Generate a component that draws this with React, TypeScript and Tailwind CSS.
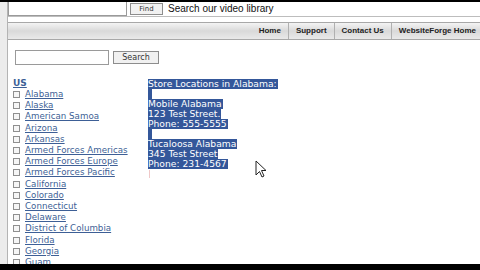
const STATES = [
  "Alabama",
  "Alaska",
  "American Samoa",
  "Arizona",
  "Arkansas",
  "Armed Forces Americas",
  "Armed Forces Europe",
  "Armed Forces Pacific",
  "California",
  "Colorado",
  "Connecticut",
  "Delaware",
  "District of Columbia",
  "Florida",
  "Georgia",
  "Guam",
];

const NAV = ["Home", "Support", "Contact Us", "WebsiteForge Home"];

// selected (highlighted) text lines, "" = empty line
const STORE = [
  "Store Locations in Alabama:",
  "",
  "Mobile Alabama",
  "123 Test Street.",
  "Phone: 555-5555",
  "",
  "Tucaloosa Alabama",
  "345 Test Street",
  "Phone: 231-4567",
];

function Cursor() {
  return (
    <svg width="12" height="19" viewBox="0 0 12 19" className="absolute left-[255px] top-[160px]">
      <path d="M1 1 L1 15 L4.5 11.5 L7 17 L9 16 L6.5 10.5 L11 10.5 Z" fill="#fff" stroke="#222" strokeWidth="1" />
    </svg>
  );
}

export default function App() {
  return (
    <div
      className="relative w-[480px] h-[270px] overflow-hidden bg-white flex flex-col"
      style={{ fontFamily: '"DejaVu Sans", Verdana, sans-serif' }}
    >
      <div className="h-[2px] shrink-0 bg-black" />
      <div className="flex flex-1 min-h-0 overflow-hidden">
        {/* left margin strip */}
        <div className="w-[8px] shrink-0 bg-[#ececec] border-r border-[#b4b4b4]" />

        <div className="flex-1 flex flex-col">
          {/* top search row */}
          <div className="shrink-0 flex items-start h-[15px] border-b border-[#bdbdbd]">
            <div className="w-[119px] h-[14px] border border-[#9a9a9a] border-t-0 bg-white" />
            <div className="ml-[3px] mt-[1px] w-[33px] h-[12px] border border-[#8d8d8d] bg-[#f1f1f1] text-[7px] leading-[10px] text-center text-[#333]">
              Find
            </div>
            <span className="ml-[5px] mt-[1px] text-[10px] leading-[12px] text-[#111]" style={{ fontFamily: '"Liberation Sans", Arial, sans-serif' }}>
              Search our video library
            </span>
          </div>

          {/* nav bar */}
          <div className="shrink-0 mt-[5px] -mr-[3px] h-[18px] flex justify-end border-t border-b border-[#a8a8a8] bg-gradient-to-b from-[#f4f4f4] via-[#d9d9d9] to-[#e9e9e9]">
            {NAV.map((n, i) => (
              <div
                key={n}
                className={
                  "flex items-center px-[7px] text-[8px] font-bold text-[#222] " +
                  (i > 0 ? "border-l border-[#b0b0b0]" : "")
                }
                style={{ fontFamily: '"Liberation Sans", Arial, sans-serif' }}
              >
                {n}
              </div>
            ))}
          </div>

          {/* body */}
          <div className="shrink-0 flex flex-col pl-[7px] pt-[10px]">
            <div className="flex items-center">
              <div className="w-[94px] h-[15px] border border-[#9a9a9a]" />
              <div className="ml-[4px] w-[46px] h-[13px] border border-[#8d8d8d] bg-[#f1f1f1] text-[8px] leading-[11px] text-center text-[#333]">
                Search
              </div>
            </div>

            <div className="flex mt-[13px]">
              <div className="w-[135px] -ml-[2px]">
                <div className="text-[9px] leading-[11px] font-bold underline text-[#3d5f96]">US</div>
                {STATES.map((s) => (
                  <div key={s} className="flex items-center h-[11.2px]">
                    <div className="w-[7px] h-[7px] border border-[#8f8f8f] bg-[#f6f6f6]" />
                    <span className="ml-[5px] text-[8.7px] leading-[11px] underline text-[#3d5f96] whitespace-nowrap">{s}</span>
                  </div>
                ))}
              </div>

              <div className="mt-[1px]">
                {STORE.map((l, i) => (
                  <div key={i} className="h-[10px] leading-[10px] text-[9.2px] text-white">
                    <span className="bg-[#34579a] inline-block h-[10px] pr-[1px]">{l || "\u00a0"}</span>
                  </div>
                ))}
                <div className="ml-[1px] mt-[1px] w-[1px] h-[8px] bg-[#f0c8c8]" />
              </div>
            </div>
          </div>
        </div>
      </div>
      <div className="h-[6px] shrink-0 bg-black" />
      <Cursor />
    </div>
  );
}
